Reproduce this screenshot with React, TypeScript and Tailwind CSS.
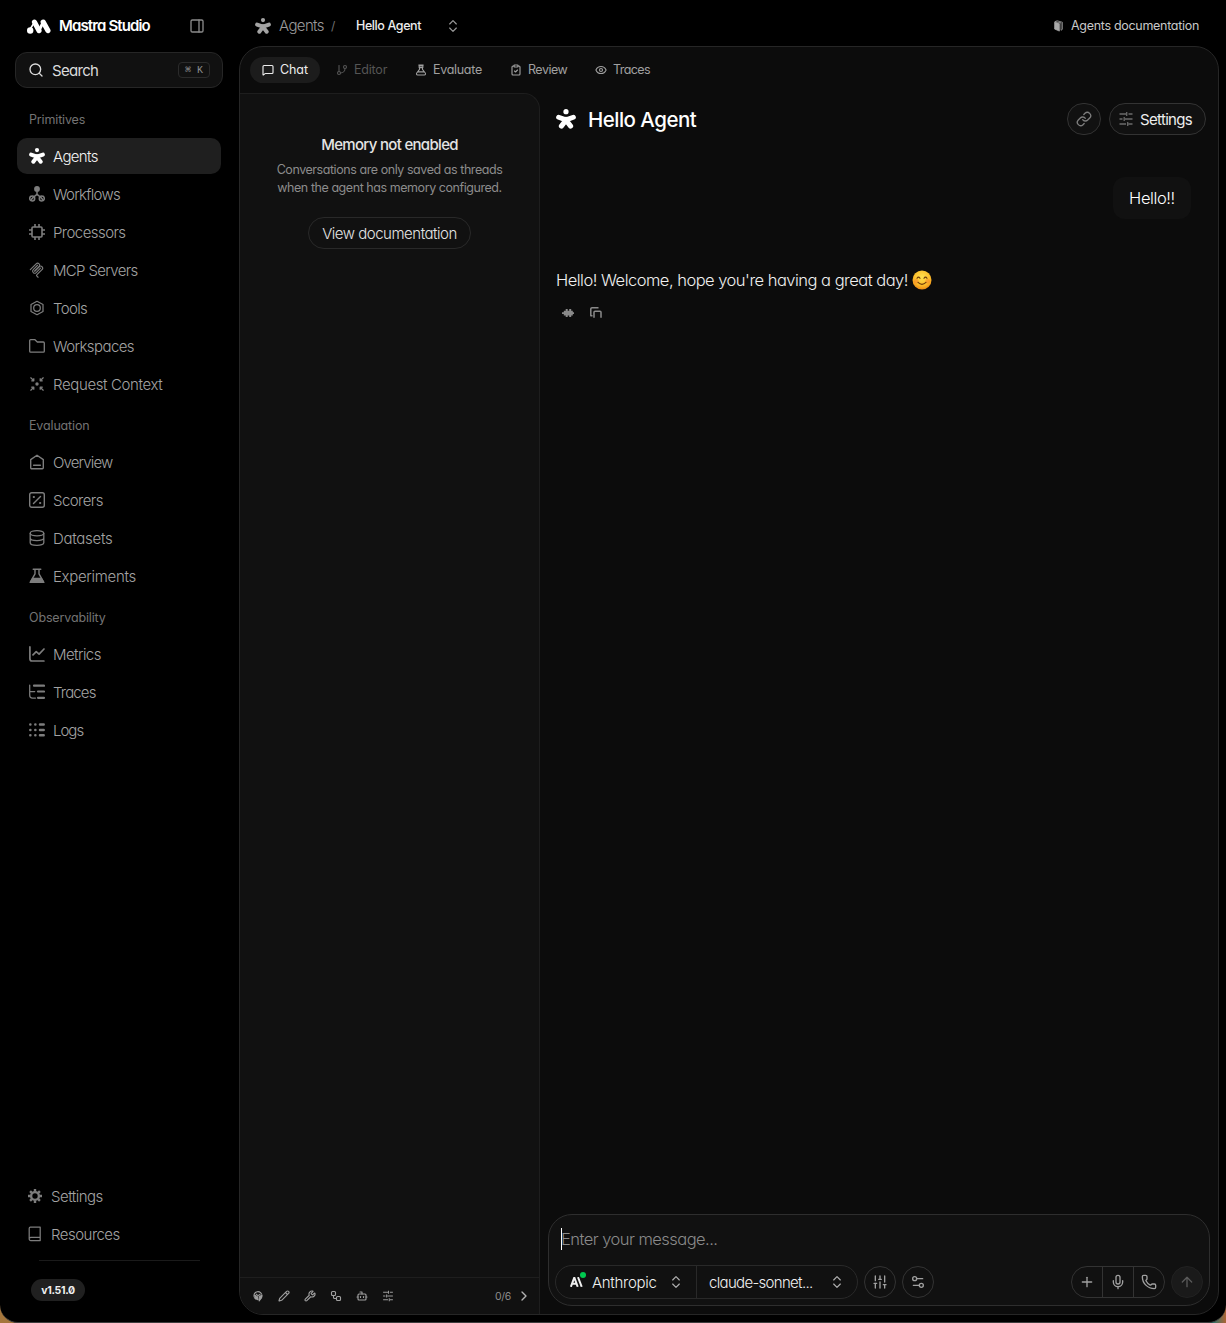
import type { ReactNode } from "react";
import {
  ArrowUp,
  Bot,
  ChevronRight,
  ChevronsUpDown,
  ClipboardCheck,
  Eye,
  GitBranch,
  Link,
  MessageSquare,
  Mic,
  PanelRight,
  Pencil,
  Phone,
  Plus,
  Search,
  Settings2,
  SlidersVertical,
  Workflow,
  Wrench,
} from "lucide-react";

type IconProps = { className?: string };

function Glyph({
  className = "size-4",
  viewBox = "0 0 16 16",
  width = 1.25,
  cap = "round",
  children,
}: IconProps & {
  viewBox?: string;
  width?: number;
  cap?: "round" | "butt";
  children: ReactNode;
}) {
  return (
    <svg
      className={`${className} shrink-0`}
      viewBox={viewBox}
      fill="none"
      stroke="currentColor"
      strokeWidth={width}
      strokeLinecap={cap}
      strokeLinejoin="round"
    >
      {children}
    </svg>
  );
}

const MastraLogo = () => (
  <Glyph className="h-[15px] w-6" viewBox="0 0 24 15" width={5.2}>
    <path d="M7.5 3.1 12 11.6M16.2 3.1l4.7 8.5" />
    <path d="M12 11.6 16.2 3.1" strokeWidth={3} />
    <path d="M3.5 9.5 7 4" strokeWidth={1.6} />
    <circle cx="3.2" cy="11.5" r="3.2" fill="currentColor" stroke="none" />
  </Glyph>
);

const AgentIcon = ({ className }: IconProps) => (
  <Glyph className={className} width={4}>
    <circle cx="8" cy="2.1" r="2.1" fill="currentColor" stroke="none" />
    <path d="M2.1 6.6 8 8.7l5.9-2.1M4.3 13.7 8 8.9l3.7 4.8" />
    <circle cx="8" cy="9" r="2.8" fill="currentColor" stroke="none" />
  </Glyph>
);

const WorkflowIcon = ({ className }: IconProps) => (
  <Glyph className={className} width={1.5}>
    <circle cx="8" cy="2.9" r="2.9" fill="currentColor" stroke="none" />
    <path d="M8 5v3.3M8 8.3 4 11.5M8 8.3l4 3.2" />
    <circle cx="3.2" cy="12.6" r="2.5" />
    <circle cx="12.8" cy="12.6" r="2.5" />
    <path d="m2.4 13.4 1.6-1.6M12 11.8l1.6 1.6" />
  </Glyph>
);

const ProcessorIcon = ({ className }: IconProps) => (
  <Glyph className={className} width={1.6} cap="butt">
    <rect x="3" y="3" width="10" height="10" rx="1" />
    <path d="M6 0v3M10 0v3M6 13v3M10 13v3M0 6h3M0 10h3M13 6h3M13 10h3" />
  </Glyph>
);

const McpIcon = ({ className }: IconProps) => (
  <Glyph className={className} viewBox="0 0 24 24" width={1.7}>
    <path d="m2 11.5 8.7-8.7a3.1 3.1 0 0 1 4.4 4.4l-6.5 6.5" />
    <path d="m8.7 13.5 6.4-6.4a3.1 3.1 0 0 1 4.4 4.4l-7.9 7.9a1 1 0 0 0 0 1.5l2 2" />
    <path d="m12.9 4.9-6.5 6.5a3.1 3.1 0 0 0 4.4 4.4l6.5-6.5" />
  </Glyph>
);

const ToolsIcon = ({ className }: IconProps) => (
  <Glyph className={className}>
    <path d="M8 1.3 14 4.5v7L8 14.7 2 11.5v-7z" />
    <circle cx="8" cy="8" r="3.3" />
  </Glyph>
);

const FolderIcon = ({ className }: IconProps) => (
  <Glyph className={className} width={1.3}>
    <path d="M.7 2.6c0-.6.4-1 1-1h4l2.6 2.4h6c.6 0 1 .4 1 1v8.2c0 .6-.4 1-1 1H1.7c-.6 0-1-.4-1-1z" />
  </Glyph>
);

const ContextIcon = ({ className }: IconProps) => (
  <Glyph className={className}>
    <path d="M1.8 1.8 4.8 4.8M4.8 2.7v2.1H2.7M14.2 1.8l-3 3M11.2 2.7v2.1h2.1M1.8 14.2l3-3M4.8 13.3v-2.1H2.7M14.2 14.2l-3-3M11.2 13.3v-2.1h2.1" />
    <circle cx="8" cy="8" r="1.7" fill="currentColor" stroke="none" />
  </Glyph>
);

const OverviewIcon = ({ className }: IconProps) => (
  <Glyph className={className} width={1.4}>
    <path d="M1.7 5.6 8 1.2l6.3 4.4v8.1a1 1 0 0 1-1 1H2.7a1 1 0 0 1-1-1zM4.6 11.2h6.8" />
  </Glyph>
);

const ScorersIcon = ({ className }: IconProps) => (
  <Glyph className={className} width={1.4}>
    <rect x=".7" y=".7" width="14.6" height="14.6" rx="2" />
    <path d="m4.5 11.5 7-7" />
    <path d="M4.8 5h.1M11.1 11h.1" strokeWidth={2.2} />
  </Glyph>
);

const DatasetIcon = ({ className }: IconProps) => (
  <Glyph className={className} width={1.3}>
    <ellipse cx="8" cy="3.3" rx="6.8" ry="2.6" />
    <path d="M1.2 3.3v9.4c0 1.5 3 2.6 6.8 2.6s6.8-1.1 6.8-2.6V3.3M1.2 8c0 1.5 3 2.6 6.8 2.6s6.8-1.1 6.8-2.6" />
  </Glyph>
);

const FlaskIcon = ({ className }: IconProps) => (
  <Glyph className={className} width={1.4}>
    <path d="M4.2 1.2h7.6M6 1.2v4.6L1.2 14.4h13.6L10 5.8V1.2" />
    <path d="M3.7 10.4h8.6l2.2 4H1.5z" fill="currentColor" />
  </Glyph>
);

const EvaluateIcon = ({ className }: IconProps) => (
  <Glyph className={className} width={1.4}>
    <path d="M5 1.2h6M5.5 1.2v3.6h5V1.2M6 4.8v2.4L2.3 12c-.8 1.2-.3 2.6 1.2 2.6h9c1.5 0 2-1.4 1.2-2.6L10 7.2V4.8M4.2 10.5h7.6M5.5 2.6h5" />
  </Glyph>
);

const MetricsIcon = ({ className }: IconProps) => (
  <Glyph className={className} width={1.7}>
    <path d="M.9.9v11.6c0 1.5.7 2.5 2 2.5h12M4 8.8l3.2-3.2 2.9 2.5L15 3" />
  </Glyph>
);

const TracesIcon = ({ className }: IconProps) => (
  <Glyph className={className}>
    <path d="M.7 1v10.3c0 1.8 1 2.8 2.8 2.8h3M.7 7.5h5" />
    <path d="M5 1.7h10M9 7.5h6M9 13.8h6" strokeWidth={2.2} />
  </Glyph>
);

const LogsIcon = ({ className }: IconProps) => (
  <Glyph className={className} width={2.5}>
    <path d="M1.3 2.5h.1M6.3 2.5h.1M11 2.5h3.7M1.3 8h.1M6.3 8h.1M11 8h3.7M1.3 13.3h.1M6.3 13.3h.1M11 13.3h3.7" />
  </Glyph>
);

const GearIcon = ({ className }: IconProps) => (
  <Glyph className={className} width={2.4} cap="butt">
    <circle cx="8" cy="8" r="3.9" />
    <path d="M8 1v2.5M8 12.5V15M1 8h2.5M12.5 8H15M3.1 3.1l1.7 1.7M11.2 11.2l1.7 1.7M12.9 3.1l-1.7 1.7M4.8 11.2l-1.7 1.7" />
  </Glyph>
);

const BookIcon = ({ className }: IconProps) => (
  <Glyph className={className}>
    <path d="M3.4 1.2h9.8v13.4H3.8a1.6 1.6 0 0 1-1.6-1.6V2.4c0-.7.5-1.2 1.2-1.2zM2.4 12.2c.4-.6.9-.8 1.5-.8h9.3" />
  </Glyph>
);

const DocsIcon = ({ className }: IconProps) => (
  <Glyph className={className} width={1}>
    <path d="m2.5 3 6 1.8v10l-6-2.6z" fill="currentColor" />
    <path d="m3 2 2.5-1 7 2v9.5l-1.8 1.2V4.3z" />
  </Glyph>
);

const SlidersIcon = ({ className }: IconProps) => (
  <Glyph className={className} cap="butt" width={1.3}>
    <path d="M1.5 3H8M10.5 3h4M8.7 1v4M1.5 8h3M7 8h7.5M6.2 6v4M1.5 13H8M10.5 13h4M9.7 11v4" />
  </Glyph>
);

const WaveIcon = () => (
  <Glyph className="size-3" viewBox="0 0 12 12" width={2} cap="butt">
    <path d="M1 5.2v1.9M2.8 3.7v4.9M4.7 2v8M6.4 3.7v4.9M8.2 2v8M9.8 3.7v4.9M11.2 5.2v1.9" />
  </Glyph>
);

const CopyIcon = () => (
  <Glyph className="size-3" viewBox="0 0 12 12" width={1.5} cap="butt">
    <path d="M2.5 8.8H.8V2A1.2 1.2 0 0 1 2 .8h6.5M4 10.8V5.2a1 1 0 0 1 1-1h5a1 1 0 0 1 1 1v5.6" />
  </Glyph>
);

const ModelMark = () => (
  <svg
    className="h-[10px] w-[13px]"
    viewBox="0 0 13 10"
    fill="none"
    stroke="currentColor"
    strokeWidth="2"
  >
    <path d="M.9 9.8 4.3.5 7.7 9.8M2.4 6.8h3.8M8 .2l3.7 9.6" />
  </svg>
);

const HeadIcon = ({ className }: IconProps) => (
  <Glyph className={className} width={1.4}>
    <path d="M5 12C2.5 10.5 2 7 3.5 4.5c1.7-2.7 5.5-3 8-1 2.3 2 2.3 5.5.8 7.5" />
    <path d="M3.5 7 7 8.5l.8 4.5-3-1.5zM9.5 8.5 13 7.5l-1.2 4-2.3 3z" fill="currentColor" />
    <path d="M5.5 5.5 8 7.5l3-2" />
  </Glyph>
);

const SmileEmoji = () => (
  <svg className="size-5" viewBox="0 0 20 20" role="img" aria-label="😊">
    <defs>
      <radialGradient id="face" cx="50%" cy="35%" r="65%">
        <stop offset="0" stopColor="#ffe14f" />
        <stop offset="0.65" stopColor="#fdbd2a" />
        <stop offset="1" stopColor="#ee8a12" />
      </radialGradient>
    </defs>
    <circle cx="10" cy="10" r="9.5" fill="url(#face)" />
    <circle cx="4.3" cy="11.3" r="2.4" fill="#f4742b" opacity=".4" />
    <circle cx="15.7" cy="11.3" r="2.4" fill="#f4742b" opacity=".4" />
    <path
      d="M5 8.3q1.5-2.3 3 0M12 8.3q1.5-2.3 3 0M6 12.4q4 3.8 8 0"
      fill="none"
      stroke="#6d3a0b"
      strokeWidth="1.1"
      strokeLinecap="round"
    />
  </svg>
);

const lucide = (Icon: typeof Eye) =>
  function LucideIcon({ className }: IconProps) {
    return <Icon className={className} strokeWidth={2.25} />;
  };

const sections = [
  {
    label: "Primitives",
    items: [
      { icon: AgentIcon, title: "Agents", tracking: "tracking-[-0.65px]", active: true },
      { icon: WorkflowIcon, title: "Workflows", tracking: "tracking-[-0.7px]" },
      { icon: ProcessorIcon, title: "Processors", tracking: "tracking-[-0.55px]" },
      { icon: McpIcon, title: "MCP Servers", tracking: "tracking-[-0.66px]" },
      { icon: ToolsIcon, title: "Tools", tracking: "tracking-[-0.65px]" },
      { icon: FolderIcon, title: "Workspaces", tracking: "tracking-[-0.57px]" },
      { icon: ContextIcon, title: "Request Context", tracking: "tracking-[-0.37px]" },
    ],
  },
  {
    label: "Evaluation",
    items: [
      { icon: OverviewIcon, title: "Overview", tracking: "tracking-[-0.85px]" },
      { icon: ScorersIcon, title: "Scorers", tracking: "tracking-[-0.55px]" },
      { icon: DatasetIcon, title: "Datasets", tracking: "tracking-[-0.28px]" },
      { icon: FlaskIcon, title: "Experiments", tracking: "tracking-[-0.32px]" },
    ],
  },
  {
    label: "Observability",
    items: [
      { icon: MetricsIcon, title: "Metrics", tracking: "tracking-[-0.57px]" },
      { icon: TracesIcon, title: "Traces", tracking: "tracking-[-0.85px]" },
      { icon: LogsIcon, title: "Logs", tracking: "tracking-[-1px]" },
    ],
  },
];

const tabs = [
  {
    icon: lucide(MessageSquare),
    title: "Chat",
    style: "w-[70px] bg-[#1c1c1c] tracking-[-0.1px] text-[#ededed]",
  },
  {
    icon: lucide(GitBranch),
    title: "Editor",
    style: "w-[75px] tracking-[-0.2px] text-[#555]",
  },
  {
    icon: EvaluateIcon,
    title: "Evaluate",
    style: "w-[91px] tracking-[-0.3px] text-[#a0a0a0]",
  },
  {
    icon: lucide(ClipboardCheck),
    title: "Review",
    style: "w-[81px] tracking-[-0.5px] text-[#a0a0a0]",
  },
  {
    icon: lucide(Eye),
    title: "Traces",
    style: "w-[79px] tracking-[-0.6px] text-[#a0a0a0]",
  },
];

const capabilities = [
  HeadIcon,
  lucide(Pencil),
  lucide(Wrench),
  lucide(Workflow),
  lucide(Bot),
  SlidersIcon,
];

function Sidebar() {
  return (
    <aside className="flex w-[239px] shrink-0 flex-col">
      <div className="flex h-[52px] items-center pl-[27px] pr-[34px] text-white">
        <MastraLogo />
        <span className="ml-2 flex-1 text-[15px] font-semibold tracking-[-0.87px]">
          Mastra Studio
        </span>
        <PanelRight className="size-4 text-[#8a8a8a]" strokeWidth={2} />
      </div>
      <div className="ml-[15px] flex h-9 w-52 items-center rounded-xl border border-[#262626] bg-[#111] px-3 text-[#dcdcdc]">
        <Search className="size-4" strokeWidth={2} />
        <span className="ml-2 flex-1 pt-0.5 text-[15px] tracking-[-0.7px]">Search</span>
        <kbd className="flex h-4 w-8 items-center justify-center gap-1.5 rounded border border-[#2b2b2b] pt-px font-['Liberation_Mono',monospace] text-[10px] leading-none text-[#8f8f8f]">
          <span>⌘</span>
          <span>K</span>
        </kbd>
      </div>
      <nav className="mt-2 flex-1 pl-[17px] pr-[18px]">
        {sections.map((section) => (
          <div key={section.label} className="pt-1">
            <h2 className="flex h-[38px] items-center pl-3 pt-0.5 text-[12.5px] tracking-[-0.15px] text-[#737373]">
              {section.label}
            </h2>
            <ul className="flex flex-col gap-0.5">
              {section.items.map((item) => (
                <li
                  key={item.title}
                  className={
                    item.active
                      ? "flex h-9 items-center gap-2 rounded-[10px] bg-[#1f1f1f] pl-3 text-white"
                      : "flex h-9 items-center gap-2 rounded-[10px] pl-3 text-[#7d7d7d]"
                  }
                >
                  <item.icon className="size-4" />
                  <span
                    className={`pt-0.5 text-[15px] font-[350] ${item.tracking} ${
                      item.active ? "text-[#f2f2f2]" : "text-[#a3a3a3]"
                    }`}
                  >
                    {item.title}
                  </span>
                </li>
              ))}
            </ul>
          </div>
        ))}
      </nav>
      <div className="flex flex-col gap-0.5 pl-[27px] text-[15px] font-[350] tracking-[-0.52px] text-[#a3a3a3]">
        <div className="flex h-9 items-center gap-2">
          <GearIcon className="size-4 text-[#7d7d7d]" />
          <span className="pt-0.5">Settings</span>
        </div>
        <div className="flex h-9 items-center gap-2">
          <BookIcon className="size-4 text-[#7d7d7d]" />
          <span className="pt-0.5">Resources</span>
        </div>
      </div>
      <div className="mx-[39px] mt-2 h-px bg-[#1a1a1a]" />
      <div className="mb-[21px] ml-[31px] mt-[18px] flex h-[22px] w-[54px] items-center justify-center rounded-full bg-[#202020] pt-px text-[10.5px] font-bold tracking-[-0.3px] text-[#f0f0f0] [font-feature-settings:'zero']">
        v1.51.0
      </div>
    </aside>
  );
}

function TopBar() {
  return (
    <header className="flex h-[46px] items-center pl-4 pr-5 pt-[5px]">
      <AgentIcon className="size-4 text-[#a3a3a3]" />
      <span className="ml-2 w-[45px] pt-0.5 text-[15px] font-[350] tracking-[-0.62px] text-[#9a9a9a]">
        Agents
      </span>
      <span className="ml-[7px] w-[6px] text-[12px] text-[#707070]">/</span>
      <span className="ml-[19px] w-[66px] whitespace-nowrap pt-0.5 text-[12.5px] font-medium tracking-[-0.4px] text-[#ededed]">
        Hello Agent
      </span>
      <ChevronsUpDown className="ml-[23px] size-4 text-[#9a9a9a]" strokeWidth={1.75} />
      <div className="flex-1" />
      <DocsIcon className="size-3 text-[#a8a8a8]" />
      <span className="ml-1.5 pt-px text-[12.5px] tracking-[-0.3px] text-[#c8c8c8]">
        Agents documentation
      </span>
    </header>
  );
}

function MemoryPanel() {
  return (
    <section className="flex w-[300px] shrink-0 flex-col rounded-tr-[16px] border-r border-t border-[#1e1e1e] bg-[#111]">
      <div className="flex flex-1 flex-col items-center pt-10 text-center">
        <h3 className="text-[15px] font-medium leading-[22px] tracking-[-0.68px] text-[#e4e4e4]">
          Memory not enabled
        </h3>
        <p className="mt-[5px] w-60 whitespace-nowrap text-[12.5px] leading-[18px] tracking-[-0.44px] text-[#8c8c8c]">
          Conversations are only saved as threads
          <br />
          when the agent has memory configured.
        </p>
        <button className="mt-5 h-8 w-[163px] whitespace-nowrap rounded-full border border-[#292929] pt-0.5 text-[15px] font-[350] tracking-[-0.48px] text-[#e4e4e4]">
          View documentation
        </button>
      </div>
      <footer className="flex h-[37px] items-center gap-3.5 border-t border-[#1e1e1e] pl-3 pr-[7px] text-[#a0a0a0]">
        {capabilities.map((Icon, i) => (
          <Icon key={i} className="size-3" />
        ))}
        <span className="ml-auto pt-px text-[10.5px] tracking-[-0.3px] text-[#8c8c8c]">0/6</span>
        <ChevronRight className="-ml-[9px] size-4 text-[#b4b4b4]" strokeWidth={2} />
      </footer>
    </section>
  );
}

function Composer() {
  return (
    <div className="mx-2 mb-2 flex h-[92px] flex-col rounded-[24px] border border-[#2e2e2e] bg-[#111] px-1.5">
      <div className="flex h-[50px] items-center pb-0.5 pl-1.5">
        <span className="h-[22px] w-px bg-white" />
        <span className="-ml-px text-[16.5px] font-[350] tracking-[-0.54px] text-[#8a8a8a]">
          Enter your message...
        </span>
      </div>
      <div className="flex h-[34px] items-center">
        <div className="flex h-[34px] w-[303px] rounded-full border border-[#292929] text-[15px] font-[350] text-[#f0f0f0]">
          <div className="flex w-[141px] items-center border-r border-[#292929] pl-3.5">
            <div className="relative">
              <ModelMark />
              <span className="absolute -right-[3px] -top-[5px] size-1.5 rounded-full bg-[#00c950]" />
            </div>
            <span className="ml-[9px] flex-1 pt-0.5 tracking-[-0.3px]">Anthropic</span>
            <ChevronsUpDown className="mr-3 size-4 text-[#b0b0b0]" strokeWidth={1.75} />
          </div>
          <div className="flex flex-1 items-center pl-3">
            <span className="flex-1 pt-0.5 tracking-[-0.68px]">claude-sonnet...</span>
            <ChevronsUpDown className="mr-3 size-4 text-[#b0b0b0]" strokeWidth={1.75} />
          </div>
        </div>
        <button className="ml-1.5 flex size-8 items-center justify-center rounded-full border border-[#333] text-[#a0a0a0]">
          <SlidersVertical className="size-4" strokeWidth={2} />
        </button>
        <button className="ml-1.5 flex size-8 items-center justify-center rounded-full border border-[#333] text-[#a0a0a0]">
          <Settings2 className="size-4 rotate-180" strokeWidth={2} />
        </button>
        <div className="ml-auto flex h-8 w-[94px] items-stretch rounded-full border border-[#333] text-[#a0a0a0]">
          <button className="flex flex-1 items-center justify-center">
            <Plus className="size-4" strokeWidth={2} />
          </button>
          <button className="flex flex-1 items-center justify-center border-x border-[#333]">
            <Mic className="size-4" strokeWidth={2} />
          </button>
          <button className="flex flex-1 items-center justify-center">
            <Phone className="size-4" strokeWidth={2} />
          </button>
        </div>
        <button className="ml-1.5 flex size-8 items-center justify-center rounded-full border border-[#222] bg-[#1a1a1a] text-[#5a5a5a]">
          <ArrowUp className="size-4" strokeWidth={2} />
        </button>
      </div>
    </div>
  );
}

function Chat() {
  return (
    <section className="flex min-w-0 flex-1 flex-col">
      <div className="flex h-[52px] items-center pl-4 pr-3">
        <AgentIcon className="size-5 text-white" />
        <h1 className="ml-3 flex-1 pt-0.5 text-[20.5px] font-medium tracking-[-0.52px] text-white">
          Hello Agent
        </h1>
        <button className="flex h-8 w-[34px] items-center justify-center rounded-full border border-[#333] bg-[#111] text-[#7d7d7d]">
          <Link className="size-4" strokeWidth={2} />
        </button>
        <button className="ml-2 flex h-8 w-[97px] items-center rounded-full border border-[#333] bg-[#111] pl-2 text-[15px] tracking-[-0.67px] text-[#ededed]">
          <SlidersIcon className="size-4 text-[#6b6b6b]" />
          <span className="ml-1.5 pt-0.5">Settings</span>
        </button>
      </div>
      <div className="flex-1 pl-4 pr-[27px] pt-8">
        <div className="ml-auto flex h-[42px] w-[78px] items-center justify-center rounded-xl bg-[#111] text-[16.5px] font-[350] tracking-[-0.4px] text-white">
          Hello!!
        </div>
        <div className="mt-[49px] flex h-6 items-center whitespace-nowrap text-[16.5px] font-[350] tracking-[-0.51px] text-[#f0f0f0]">
          <span className="mr-1 w-[352px]">Hello! Welcome, hope you're having a great day!</span>
          <SmileEmoji />
        </div>
        <div className="mt-3.5 flex gap-4 pl-1.5 pt-px text-[#8a8a8a]">
          <WaveIcon />
          <CopyIcon />
        </div>
      </div>
      <Composer />
    </section>
  );
}

export default function App() {
  return (
    <div className="h-[1323px] w-[1226px] overflow-hidden bg-[linear-gradient(90deg,#a5763c_0%,#80603c_50%,#1e7775_98.8%,#ae6434_100%)] font-['Inter','Liberation_Sans',sans-serif] [font-feature-settings:'cv11']">
      <div className="flex h-[1323px] overflow-hidden rounded-b-[18px] border-b border-[#3d3d3d] bg-black">
        <Sidebar />
        <div className="flex min-w-0 flex-1 flex-col pb-[7px] pr-[7px]">
          <TopBar />
          <main className="flex min-h-0 flex-1 flex-col overflow-hidden rounded-[24px] border border-[#262626] bg-[#0c0c0c]">
            <div className="flex h-[46px] shrink-0 items-center gap-1 pl-2.5">
              {tabs.map((tab) => (
                <button
                  key={tab.title}
                  className={`flex h-[26px] items-center gap-1.5 whitespace-nowrap rounded-full pl-3 text-[12.5px] ${tab.style}`}
                >
                  <tab.icon className="size-3 shrink-0" />
                  {tab.title}
                </button>
              ))}
            </div>
            <div className="flex min-h-0 flex-1">
              <MemoryPanel />
              <Chat />
            </div>
          </main>
        </div>
      </div>
    </div>
  );
}
